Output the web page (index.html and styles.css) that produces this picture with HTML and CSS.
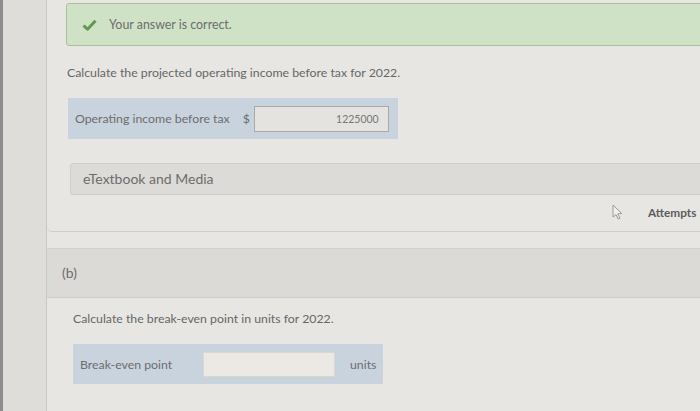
FILE: index.html
```html
<!DOCTYPE html>
<html lang="en">
<head>
  <meta charset="UTF-8">
  <title>Question</title>
  <link rel="stylesheet" href="styles.css">
</head>
<body>

  <div class="page">
    <div class="rail"></div>

    <div class="main">
      <div class="part part-a">
        <div class="feedback">
          <svg class="check" width="15" height="12" viewBox="0 0 15 12">
            <path d="M1.5 6.5 L5.5 10.2 L13.5 1.8" fill="none" stroke="#5f9a55" stroke-width="3" stroke-linejoin="round"/>
          </svg>
          <span>Your answer is correct.</span>
        </div>

        <p class="question">Calculate the projected operating income before tax for 2022.</p>

        <div class="answer answer-a">
          <span class="label">Operating income before tax</span>
          <span class="unit-pre">$</span>
          <div class="input filled">1225000</div>
        </div>

        <div class="media">eTextbook and Media</div>

        <div class="attempts">
          <svg class="cursor" width="11" height="16" viewBox="0 0 11 16">
            <path d="M1 1 L1 13 L4 10.5 L6.2 15 L8 14.2 L5.8 9.8 L9.8 9.6 Z" fill="#f1f0ed" stroke="#9a9a9a" stroke-width="1"/>
          </svg>
          <span class="attempts-text">Attempts</span>
        </div>
      </div>

      <div class="part-head">(b)</div>

      <div class="part-body">
        <p class="question">Calculate the break-even point in units for 2022.</p>

        <div class="answer answer-b">
          <span class="label">Break-even point</span>
          <div class="input empty"></div>
          <span class="unit-post">units</span>
        </div>
      </div>
    </div>
  </div>

</body>
</html>
```

FILE: styles.css
```css
body {
  margin: 0;
  font-family: Lato, "Open Sans", sans-serif;
  color: #6d6d6d;
  background: #e8e6e2;
  overflow: hidden;
}
p {
  margin: 0;
}
.page {
  display: flex;
  height: 411px;
}
.rail {
  width: 47px;
  box-sizing: border-box;
  flex-shrink: 0;
  background: #dfddd9;
  border-left: 3px solid #8c8c8c;
  border-right: 1px solid #cac8c4;
}
.main {
  flex: 1;
  min-width: 0;
  overflow: hidden;
}
.part-a {
  height: 232px;
  box-sizing: border-box;
  padding: 3px 0 0 19px;
  border-bottom: 1px solid #cfcdc9;
  border-bottom-left-radius: 5px;
}
.feedback {
  display: flex;
  align-items: center;
  height: 43px;
  box-sizing: border-box;
  margin-right: -10px;
  padding-left: 15px;
  background: #cfe2c5;
  border: 1px solid #a7c19c;
  border-radius: 3px;
  font-size: 12.4px;
}
.check {
  margin-right: 12px;
}
.question {
  font-size: 12.3px;
  line-height: 16px;
  color: #666;
}
.part-a .question {
  margin: 19px 0 0 1px;
}
.answer {
  display: flex;
  align-items: center;
  background: #c9d3de;
  font-size: 12.3px;
}
.answer-a {
  width: 330px;
  height: 41px;
  margin: 17px 0 0 2px;
  padding-left: 7px;
  box-sizing: border-box;
}
.unit-pre {
  margin-left: 13px;
  width: 11px;
}
.input {
  box-sizing: border-box;
  height: 26px;
  border: 1px solid #a9a9a9;
  background: #e5e3e0;
}
.filled {
  width: 135px;
  padding-right: 9px;
  text-align: right;
  font-size: 10.5px;
  line-height: 24px;
  color: #777;
}
.media {
  height: 32px;
  box-sizing: border-box;
  margin: 24px -10px 0 4px;
  padding-left: 12px;
  line-height: 30px;
  font-size: 14px;
  background: #dddbd7;
  border: 1px solid #d0cecb;
  border-radius: 3px;
}
.attempts {
  display: flex;
  align-items: center;
  height: 34px;
  white-space: nowrap;
  padding-left: 546px;
}
.cursor {
  flex-shrink: 0;
  margin-right: 25px;
}
.attempts-text {
  font-size: 11.8px;
  font-weight: bold;
  color: #5c5c5c;
}
.part-head {
  height: 50px;
  box-sizing: border-box;
  margin-top: 16px;
  padding-left: 15px;
  line-height: 48px;
  font-size: 14px;
  background: #dcdad6;
  border-top: 1px solid #d2d0cc;
  border-bottom: 1px solid #cfcdc9;
}
.part-body {
  padding: 13px 0 0 26px;
}
.answer-b {
  width: 310px;
  height: 40px;
  margin-top: 17px;
  padding-left: 7px;
  box-sizing: border-box;
}
.answer-b .label {
  width: 123px;
}
.empty {
  width: 132px;
  height: 25px;
  background: #ece9e5;
  border-color: #d9d7d3;
}
.unit-post {
  margin-left: 15px;
}
```
